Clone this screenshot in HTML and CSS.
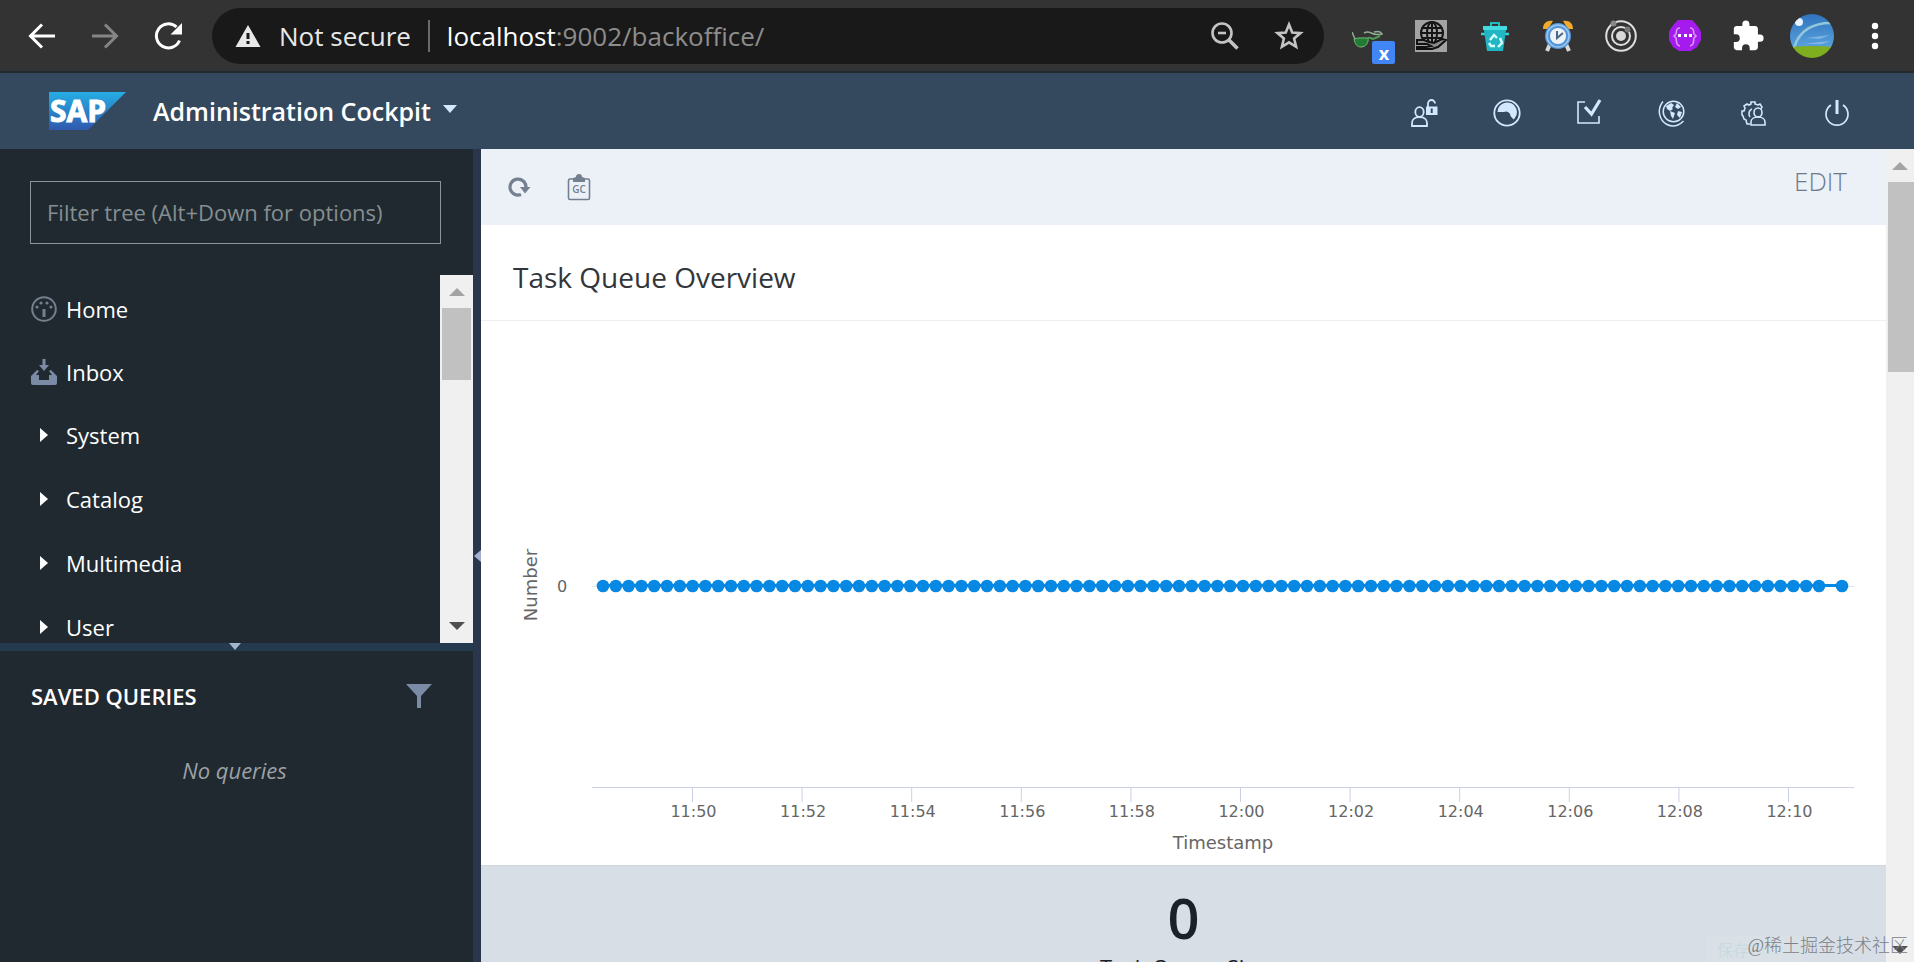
FILE: index.html
```html
<!DOCTYPE html>
<html lang="en">
<head>
<meta charset="utf-8">
<title>Administration Cockpit</title>
<link rel="stylesheet" href="styles.css">
</head>
<body>
<div class="browser">
  <nav class="nav-buttons">
    <button class="icon-btn" aria-label="Back"><svg width="28" height="28" viewBox="0 0 28 28" fill="none" stroke="#fff" stroke-width="3"><path d="M27 14H3M14 2.500L2.500 14 14 25.500"/></svg></button>
    <button class="icon-btn" aria-label="Forward"><svg width="28" height="28" viewBox="0 0 28 28" fill="none" stroke="#858585" stroke-width="3"><path d="M1 14h24M14 2.500L25.500 14 14 25.500"/></svg></button>
    <button class="icon-btn" aria-label="Reload"><svg width="30" height="30" viewBox="0 0 30 30"><path d="M25.500 19.500A12 12 0 1 1 22.500 6" fill="none" stroke="#fff" stroke-width="3"/><path d="M28 2v11.500H16.500z" fill="#fff"/></svg></button>
  </nav>
  <div class="address">
    <svg width="26" height="24" viewBox="0 0 26 24"><path d="M13 1L25.500 23H.500z" fill="#e8e8e8"/><path d="M11.500 9h3v6h-3zM11.500 17h3v3h-3z" fill="#191919"/></svg>
    <span class="not-secure">Not secure</span>
    <span class="url"><b>localhost</b>:9002/backoffice/</span>
    <button class="icon-btn" aria-label="Zoom"><svg width="30" height="30" viewBox="0 0 30 30" fill="none" stroke="#c4c4c4" stroke-width="2.600"><circle cx="12" cy="12" r="9.500"/><path d="M8 12h8"/><path d="M19 19l8.500 8.500" stroke-width="3.600"/></svg></button>
    <button class="icon-btn" aria-label="Bookmark"><svg width="30" height="30" viewBox="0 0 30 30" fill="none" stroke="#c4c4c4" stroke-width="2.600"><path d="M15 3.500l3.200 8 8.300.600-6.400 5.400 2 8.300L15 21.300l-7.100 4.500 2-8.300-6.400-5.400 8.300-.600z"/></svg></button>
  </div>
  <div class="extensions">
    <button class="icon-btn badge-host" aria-label="Glasses extension"><svg width="32" height="32" viewBox="0 0 32 32"><path d="M12 13c4-2 5-1 7 0 4 2 7 2 11 1-1-2-4-3-8-2" fill="none" stroke="#8fae92" stroke-width="1.500"/><path d="M3 19L0 12" stroke="#8fae92" stroke-width="1.500"/><path d="M2 19c4-1.500 9-1 14-1 1 4-2 9-7 9-4 0-6-3-7-8z" fill="#237a32" stroke="#74bd7b"/><path d="M16 18c3-1 4 1 5 1l7-3" fill="none" stroke="#4b9a55" stroke-width="2"/></svg><span class="badge">x</span></button>
    <button class="icon-btn" aria-label="Web extension"><svg width="32" height="32" viewBox="0 0 32 32"><path d="M0 0h32v32H0z" fill="#a3a3a3"/><g fill="none" stroke="#151515" stroke-width="2"><circle cx="17" cy="13" r="11"/><ellipse cx="17" cy="13" rx="5" ry="11"/><path d="M17 2v20M6 13h22M8 8h18M8 18h18"/></g><path d="M2 20h7l5 2 5 1 8-4 4 1-8 7-6 2H2v-2h9l5-1-4-2H2z" fill="#8a8a8a" stroke="#111" stroke-width="2"/></svg></button>
    <button class="icon-btn" aria-label="Cleaner extension"><svg width="32" height="32" viewBox="0 0 32 32"><path d="M12 6V3h8v3" fill="none" stroke="#22b8c0" stroke-width="2"/><path d="M4 6h24v4H4z" fill="#42dbe0"/><path d="M2 14h28" stroke="#35d3d9" stroke-width="2.500"/><path d="M5 10h22l-3 21H8z" fill="#22b6c4"/><path d="M11 20l4-5 3 3M21 18l2 5-4 4M16 26h-4l-2-3" fill="none" stroke="#d4ffff" stroke-width="2.400"/></svg></button>
    <button class="icon-btn" aria-label="Alarm extension"><svg width="32" height="32" viewBox="0 0 32 32"><path d="M8 24l-3 7M24 24l3 7" stroke="#d8d8d8" stroke-width="4"/><path d="M1 9C1 3 5 0 11 1L6 9zM31 9c0-6-4-9-10-8l5 8z" fill="#f4aa27"/><circle cx="16" cy="16" r="13" fill="#5595d5"/><circle cx="16" cy="16" r="11" fill="none" stroke="#9ac8f0" stroke-width="1.500"/><circle cx="16" cy="16" r="8" fill="#eef3f8"/><path d="M15 11v7l6-5" fill="none" stroke="#4a6884" stroke-width="2"/></svg></button>
    <button class="icon-btn" aria-label="Orbit extension"><svg width="32" height="32" viewBox="0 0 32 32"><g fill="none" stroke="#dedede" stroke-width="2"><circle cx="16" cy="16" r="14.800"/><circle cx="16" cy="16" r="9"/></g><circle cx="16" cy="16" r="5" fill="#d8d8d8"/><circle cx="8.500" cy="3.500" r="3" fill="#888"/><circle cx="22.500" cy="9.500" r="3" fill="#777"/></svg></button>
    <button class="icon-btn" aria-label="Code extension"><svg width="32" height="32" viewBox="0 0 32 32"><path d="M9 0h14l3 3 4 5 2 4v8l-4 7-6 4H10l-6-4-4-7v-8l2-4 4-5z" fill="#a51bee"/><path d="M11 8c-5 0-3 4-4 6l-2 2 2 2c1 2-1 7 4 8M21 8c5 0 3 4 4 6l2 2-2 2c-1 2 1 7-4 8" fill="none" stroke="#d59af5" stroke-width="1.600"/><path d="M9 14h3v3H9zM15 14h3v3h-3zM20 14h3v3h-3z" fill="#fff"/></svg></button>
    <button class="icon-btn" aria-label="Extensions"><svg width="34" height="34" viewBox="0 0 24 24"><path d="M20.500 11H19V7c0-1.100-.9-2-2-2h-4V3.500a2.500 2.500 0 0 0-5 0V5H4c-1.100 0-2 .9-2 2v3.800h1.500a2.700 2.700 0 0 1 0 5.400H2V20c0 1.100.9 2 2 2h3.800v-1.500a2.700 2.700 0 0 1 5.400 0V22H17c1.100 0 2-.9 2-2v-4h1.500a2.500 2.500 0 0 0 0-5z" fill="#fff"/></svg></button>
    <button class="icon-btn" aria-label="Profile"><svg width="44" height="44" viewBox="0 0 44 44"><defs><clipPath id="av"><circle cx="22" cy="22" r="22"/></clipPath><linearGradient id="sky" x1="0" y1="0" x2="0" y2="1"><stop offset="0" stop-color="#2f74bd"/><stop offset="1" stop-color="#5aa2de"/></linearGradient></defs><g clip-path="url(#av)"><path d="M0 0h44v34H0z" fill="url(#sky)"/><circle cx="9" cy="8" r="4" fill="#e8f4ff"/><path d="M4 34C9 16 24 8 44 9" fill="none" stroke="#92c8da" stroke-width="2.500"/><path d="M16 24l24-3-10 4z" fill="#7db5e4"/><path d="M14 30l26-3-8 3z" fill="#86bae6"/><path d="M0 33q22-2 44 0v11H0z" fill="#7fae1e"/></g></svg></button>
    <button class="icon-btn" aria-label="Menu"><svg width="8" height="28" viewBox="0 0 8 28" fill="#fff"><circle cx="4" cy="4" r="3.200"/><circle cx="4" cy="14" r="3.200"/><circle cx="4" cy="24" r="3.200"/></svg></button>
  </div>
</div>

<header class="app-header">
  <svg class="logo" width="77" height="38" viewBox="0 0 77 38" role="img" aria-label="SAP"><defs><linearGradient id="lg" x1="0" y1="0" x2="0" y2="1"><stop offset="0" stop-color="#25aee4"/><stop offset="1" stop-color="#3058ae"/></linearGradient></defs><path d="M0 0h77L39 38H0z" fill="url(#lg)"/><text x="1" y="30" class="logo-text">SAP</text></svg>
  <button class="cockpit">Administration Cockpit<svg width="14" height="8" viewBox="0 0 14 8"><path d="M0 0h14L7 8z" fill="#d1e8ff"/></svg></button>
  <div class="header-icons">
    <button class="icon-btn" aria-label="User permissions"><svg width="28" height="28" viewBox="0 0 28 28" fill="none" stroke="#d1e8ff" stroke-width="1.800"><ellipse cx="9.500" cy="13" rx="4.200" ry="4.800"/><path d="M2 27v-3c0-3.500 3-6 7.500-6s7.500 2.500 7.500 6v3z"/><path d="M18 8V4.500a3.500 3.500 0 0 1 7 0" /><path d="M16 7.500h11.500V16H16z" fill="#d1e8ff" stroke="none"/><path d="M21.700 9.500v4.500" stroke="#33495e" stroke-width="2"/></svg></button>
    <button class="icon-btn" aria-label="Perspective"><svg width="28" height="28" viewBox="0 0 28 28"><circle cx="14" cy="14" r="12.700" fill="none" stroke="#d1e8ff" stroke-width="1.800"/><path d="M4.500 13a9.700 9.700 0 1 1 16 7.500L17.500 17A4.500 4.500 0 0 0 11 13z" fill="#d1e8ff"/></svg></button>
    <button class="icon-btn" aria-label="Tasks"><svg width="28" height="28" viewBox="0 0 28 28" fill="none" stroke="#d1e8ff"><path d="M10 3H3v21h21v-7" stroke-width="1.600"/><path d="M10 8l6.500 7L25 1" stroke-width="3.200"/></svg></button>
    <button class="icon-btn" aria-label="Language"><svg width="28" height="28" viewBox="0 0 28 28"><g fill="none" stroke="#d1e8ff" stroke-width="1.500"><circle cx="15.500" cy="12.500" r="10.300"/><path d="M5 2.500C-2 11 2 22 9 25.500c6 3 12 1 16.500-3.500"/></g><path d="M8 7l5-3 3 2-2 3 1 1-3 2-3-2zM19 4l4 4-3 2-3-2zM12 12l5 2-2 6-2-3zM20 12l4 1-2 6-3-3z" fill="#d1e8ff"/></svg></button>
    <button class="icon-btn" aria-label="User settings"><svg width="28" height="28" viewBox="0 0 28 28" fill="none" stroke="#d1e8ff" stroke-width="1.600"><path d="M10 25H7l-1-4-2-1-1-3-1-1v-4h2l1-3-1-2 3-2 2 1 2-1V3h4v2l3 1 2-1 2 3-1 2M10 18c-2-3-1-7 2-8"/><ellipse cx="18" cy="13.500" rx="4" ry="4.500"/><path d="M11 26v-3c0-3 3-5 7-5s7 2 7 5v3z"/></svg></button>
    <button class="icon-btn" aria-label="Log out"><svg width="28" height="28" viewBox="0 0 28 28" fill="none" stroke="#d1e8ff"><path d="M8 6a11 11 0 1 0 12 0" stroke-width="1.700"/><path d="M14 1v14" stroke-width="3"/></svg></button>
  </div>
</header>

<div class="workspace">
  <aside class="sidebar">
    <div class="filter"><input type="text" aria-label="Filter tree" placeholder="Filter tree (Alt+Down for options)"></div>
    <div class="tree">
      <ul class="tree-list">
        <li class="leaf"><svg width="26" height="26" viewBox="0 0 26 26"><circle cx="13" cy="13" r="11.800" fill="none" stroke="#74808e" stroke-width="2"/><path d="M11.500 13h3v8h-3z" fill="#74808e"/><g fill="#74808e"><circle cx="6" cy="11" r="1.600"/><circle cx="10" cy="7" r="1.600"/><circle cx="16" cy="7" r="1.600"/><circle cx="20" cy="11" r="1.600"/></g></svg><span>Home</span></li>
        <li class="leaf"><svg width="26" height="26" viewBox="0 0 26 26"><path d="M11.500 0h3v6H18l-5 6-5-6h3.500z" fill="#7c8ba5"/><path d="M6 11L0 17v7a2 2 0 0 0 2 2h22a2 2 0 0 0 2-2v-7l-6-6-2 1 3 4h-3v5H8v-5H5l3-4z" fill="#7c8ba5"/></svg><span>Inbox</span></li>
        <li><svg width="26" height="14" viewBox="0 0 26 14"><path d="M9 0l8 7-8 7z" fill="#fff"/></svg><span>System</span></li>
        <li><svg width="26" height="14" viewBox="0 0 26 14"><path d="M9 0l8 7-8 7z" fill="#fff"/></svg><span>Catalog</span></li>
        <li><svg width="26" height="14" viewBox="0 0 26 14"><path d="M9 0l8 7-8 7z" fill="#fff"/></svg><span>Multimedia</span></li>
        <li><svg width="26" height="14" viewBox="0 0 26 14"><path d="M9 0l8 7-8 7z" fill="#fff"/></svg><span>User</span></li>
      </ul>
      <div class="scrollbar tree-scroll"><svg width="16" height="8" viewBox="0 0 16 8"><path d="M0 8l8-8 8 8z" fill="#a3a3a3"/></svg><div class="thumb"></div><svg class="down" width="16" height="8" viewBox="0 0 16 8"><path d="M0 0l8 8 8-8z" fill="#505050"/></svg></div>
    </div>
    <div class="splitter-h"><svg width="12" height="7" viewBox="0 0 12 7"><path d="M0 0h12L6 7z" fill="#a4b4cb"/></svg></div>
    <section class="queries">
      <div class="queries-head"><h2>SAVED QUERIES</h2><button class="icon-btn" aria-label="Filter queries"><svg width="26" height="26" viewBox="0 0 26 26"><path d="M0 1h26L15 13v12h-4V13z" fill="#7c8ba5"/></svg></button></div>
      <p class="no-queries">No queries</p>
    </section>
  </aside>
  <div class="splitter-v"><svg width="7" height="12" viewBox="0 0 7 12"><path d="M7 0v12L0 6z" fill="#a4b0d0"/></svg></div>
  <main class="content">
    <div class="toolbar">
      <button class="icon-btn" aria-label="Refresh"><svg width="24" height="24" viewBox="0 0 24 24"><path d="M14 19.500A8 8 0 1 1 19 12" fill="none" stroke="#74808f" stroke-width="3.200"/><path d="M13 12h10.500L18 18.500z" fill="#74808f"/></svg></button>
      <button class="icon-btn" aria-label="Garbage collection"><svg width="24" height="28" viewBox="0 0 24 28"><rect x="1.500" y="6" width="21" height="20.500" rx="1.500" fill="none" stroke="#74808f" stroke-width="1.600"/><path d="M6 9V5l3-1a3 3 0 0 1 6 0l3 1v4z" fill="#74808f"/><text x="12" y="20" class="gc">GC</text></svg></button>
      <button class="edit">EDIT</button>
    </div>
    <h1 class="widget-title">Task Queue Overview</h1>
    <svg class="chart" id="chart" role="img" aria-label="Task queue chart"></svg>
    <section class="summary">
      <div class="count">0</div>
      <div class="count-label">Task Queue Size</div>
    </section>
  </main>
  <div class="scrollbar page-scroll"><svg width="16" height="8" viewBox="0 0 16 8"><path d="M0 8l8-8 8 8z" fill="#a3a3a3"/></svg><div class="thumb"></div><svg class="down" width="16" height="8" viewBox="0 0 16 8"><path d="M0 0l8 8 8-8z" fill="#505050"/></svg></div>
</div>
<span class="watermark-back">保存</span>
<span class="watermark">@稀土掘金技术社区</span>
<script src="chart.js"></script>
</body>
</html>
```
FILE: styles.css
```css
* { box-sizing: border-box; }
body { margin: 0; height: 100vh; overflow: hidden; display: flex; flex-direction: column; font-family: "Open Sans", "Noto Sans", sans-serif; font-size: 22px; color: #fff; background: #20292f; }
button { font: inherit; color: inherit; border: 0; padding: 0; background: none; }
svg { display: block; flex: none; }
.icon-btn { display: flex; align-items: center; justify-content: center; }

.browser { flex: none; height: 73px; display: flex; align-items: center; background: #333; border-bottom: 2px solid #22292f; padding-right: 7px; }
.nav-buttons { width: 212px; display: flex; gap: 35px; padding-left: 28px; }
.address { flex: 1; height: 56px; border-radius: 28px; background: #191919; display: flex; align-items: center; padding: 0 20px 0 23px; font-size: 26px; }
.not-secure { margin-left: 18px; padding-right: 17px; border-right: 2px solid #6b6b6b; line-height: 32px; color: #e8e8e8; }
.url { flex: 1; margin-left: 17px; color: #8d8d8d; }
.url b { font-weight: 400; color: #fff; }
.address .icon-btn + .icon-btn { margin-left: 34px; }
.extensions { width: 583px; padding-left: 12px; display: grid; grid-template-columns: repeat(9, 1fr); }
.badge-host { position: relative; }
.badge { position: absolute; right: 4px; bottom: -6px; width: 23px; height: 23px; border-radius: 2px; background: #4285f4; font-size: 18px; line-height: 24px; font-weight: 700; text-align: center; }

.app-header { flex: none; height: 76px; display: flex; align-items: center; background: #34495e; padding: 0 36px 0 49px; }
.logo { overflow: visible; }
.logo-text { font-size: 30px; font-weight: 700; fill: #fff; stroke: #fff; stroke-width: 1px; }
.cockpit { margin-left: 27px; display: flex; align-items: center; gap: 12px; font-size: 25px; font-weight: 600; }
.cockpit svg { margin-bottom: 4px; }
.header-icons { margin-left: auto; padding-top: 4px; width: 495px; display: grid; grid-template-columns: repeat(6, 1fr); }

.workspace { flex: 1; min-height: 0; display: flex; }
.sidebar { flex: none; width: 473px; display: flex; flex-direction: column; background: #20292f; }
.filter { padding: 32px 32px 31px 30px; }
.filter input { display: block; width: 100%; height: 63px; border: 1px solid #8b969b; background: transparent; color: #fff; font: inherit; padding: 0 16px 2px; }
.filter input::placeholder { color: #858f92; opacity: 1; }
.tree { height: 368px; display: flex; overflow: hidden; }
.tree-list { flex: 1; list-style: none; margin: 0; padding: 2px 0 0 31px; }
.tree-list li { height: 64px; display: flex; align-items: center; gap: 9px; line-height: 32px; }
.tree-list .leaf { height: 63px; }
.scrollbar { flex: none; display: flex; flex-direction: column; align-items: center; background: #f0f0f0; }
.scrollbar .thumb { align-self: stretch; margin: 12px 2px 0; background: #c1c1c1; }
.scrollbar .down { margin-top: auto; margin-bottom: 13px; }
.tree-scroll { width: 33px; padding-top: 13px; }
.tree-scroll .thumb { height: 72px; }
.splitter-h { flex: none; height: 8px; padding-right: 4px; background: #25394f; display: flex; justify-content: center; }
.queries-head { display: flex; align-items: center; justify-content: space-between; padding: 29px 41px 0 31px; }
.queries h2 { margin: 0; font-size: 22px; line-height: 32px; font-weight: 600; }
.no-queries { margin: 42px 0 0; padding-right: 4px; line-height: 32px; text-align: center; font-style: italic; color: #9ba1a5; }
.splitter-v { flex: none; width: 8px; background: #2a364b; display: flex; align-items: center; justify-content: flex-end; }

.content { flex: 1; min-width: 0; overflow: hidden; display: flex; flex-direction: column; background: #fff; }
.toolbar { flex: none; height: 76px; display: flex; align-items: center; gap: 36px; padding: 0 39px 0 26px; background: #ecf1f8; }
.gc { font-size: 10px; font-weight: 600; text-anchor: middle; fill: #74808f; }
.edit { margin-left: auto; padding-bottom: 13px; font-size: 26px; font-weight: 300; color: #6f7a8b; }
.widget-title { flex: none; margin: 0; height: 96px; padding: 9px 32px 0; line-height: 86px; font-size: 28px; font-weight: 400; color: #32363a; border-bottom: 1px solid #edf0f2; }
.chart { width: 100%; height: 544px; font-family: "DejaVu Sans", sans-serif; font-size: 16px; }
.chart text { fill: #666; text-anchor: middle; }
.chart .axis-title { font-size: 18px; }
.summary { flex: none; background: #d7dee6; color: #1a2129; text-align: center; padding-top: 16px; border-top: 1px solid #d0d7df; }
.count { font-size: 56px; line-height: 70px; font-weight: 600; }
.count-label { font-size: 22px; line-height: 30px; }
.page-scroll { width: 28px; padding-top: 13px; }
.page-scroll .thumb { height: 190px; margin-right: 0; }
.page-scroll .down { margin-bottom: 8px; }
.watermark { position: absolute; right: 6px; bottom: 3px; font-family: "Liberation Serif", "Noto Sans CJK SC", sans-serif; font-size: 18px; line-height: 26px; font-weight: 300; color: #7c8188; }
.watermark-back { position: absolute; right: 111px; bottom: 0; width: 96px; padding-left: 10px; background: #d9e1e7; font-family: "Noto Sans CJK SC", sans-serif; font-size: 16px; line-height: 26px; color: #c8d9e1; }
```
FILE: chart.js
```js
// Positions are percentages of the chart width, so the plot follows the window.
const NS = "http://www.w3.org/2000/svg";
const chart = document.getElementById("chart");
const BASE = 1405;
const pct = x => (x / BASE * 100) + "%";

function add(tag, attrs, text) {
  const el = document.createElementNS(NS, tag);
  for (const key in attrs) el.setAttribute(key, attrs[key]);
  if (text) el.textContent = text;
  chart.appendChild(el);
}

add("line", { x1: pct(111), x2: pct(1373), y1: 265.5, y2: 265.5, stroke: "#e0e4ea" });
add("line", { x1: pct(111), x2: pct(1373), y1: 466.5, y2: 466.5, stroke: "#ccd0e6" });

const labels = ["11:50", "11:52", "11:54", "11:56", "11:58", "12:00", "12:02", "12:04", "12:06", "12:08", "12:10"];
labels.forEach((label, i) => {
  const x = 211.5 + i * 109.6;
  add("line", { x1: pct(x), x2: pct(x), y1: 467, y2: 481, stroke: "#ccd0e6" });
  add("text", { x: pct(x + 1), y: 496 }, label);
});

add("text", { x: pct(742), y: 528, class: "axis-title" }, "Timestamp");
add("text", { x: 0, y: 0, transform: "translate(56 264) rotate(-90)", class: "axis-title" }, "Number");
add("text", { x: 81, y: 271 }, "0");

const first = 122, last = 1361, step = 12.8;
add("line", { x1: pct(first), x2: pct(last), y1: 264.5, y2: 264.5, stroke: "#0788e2", "stroke-width": 3 });
for (let i = 0; i < 96; i++) add("circle", { cx: pct(first + i * step), cy: 265, r: 6.3, fill: "#0788e2" });
add("circle", { cx: pct(last), cy: 265, r: 6.3, fill: "#0788e2" });
```
